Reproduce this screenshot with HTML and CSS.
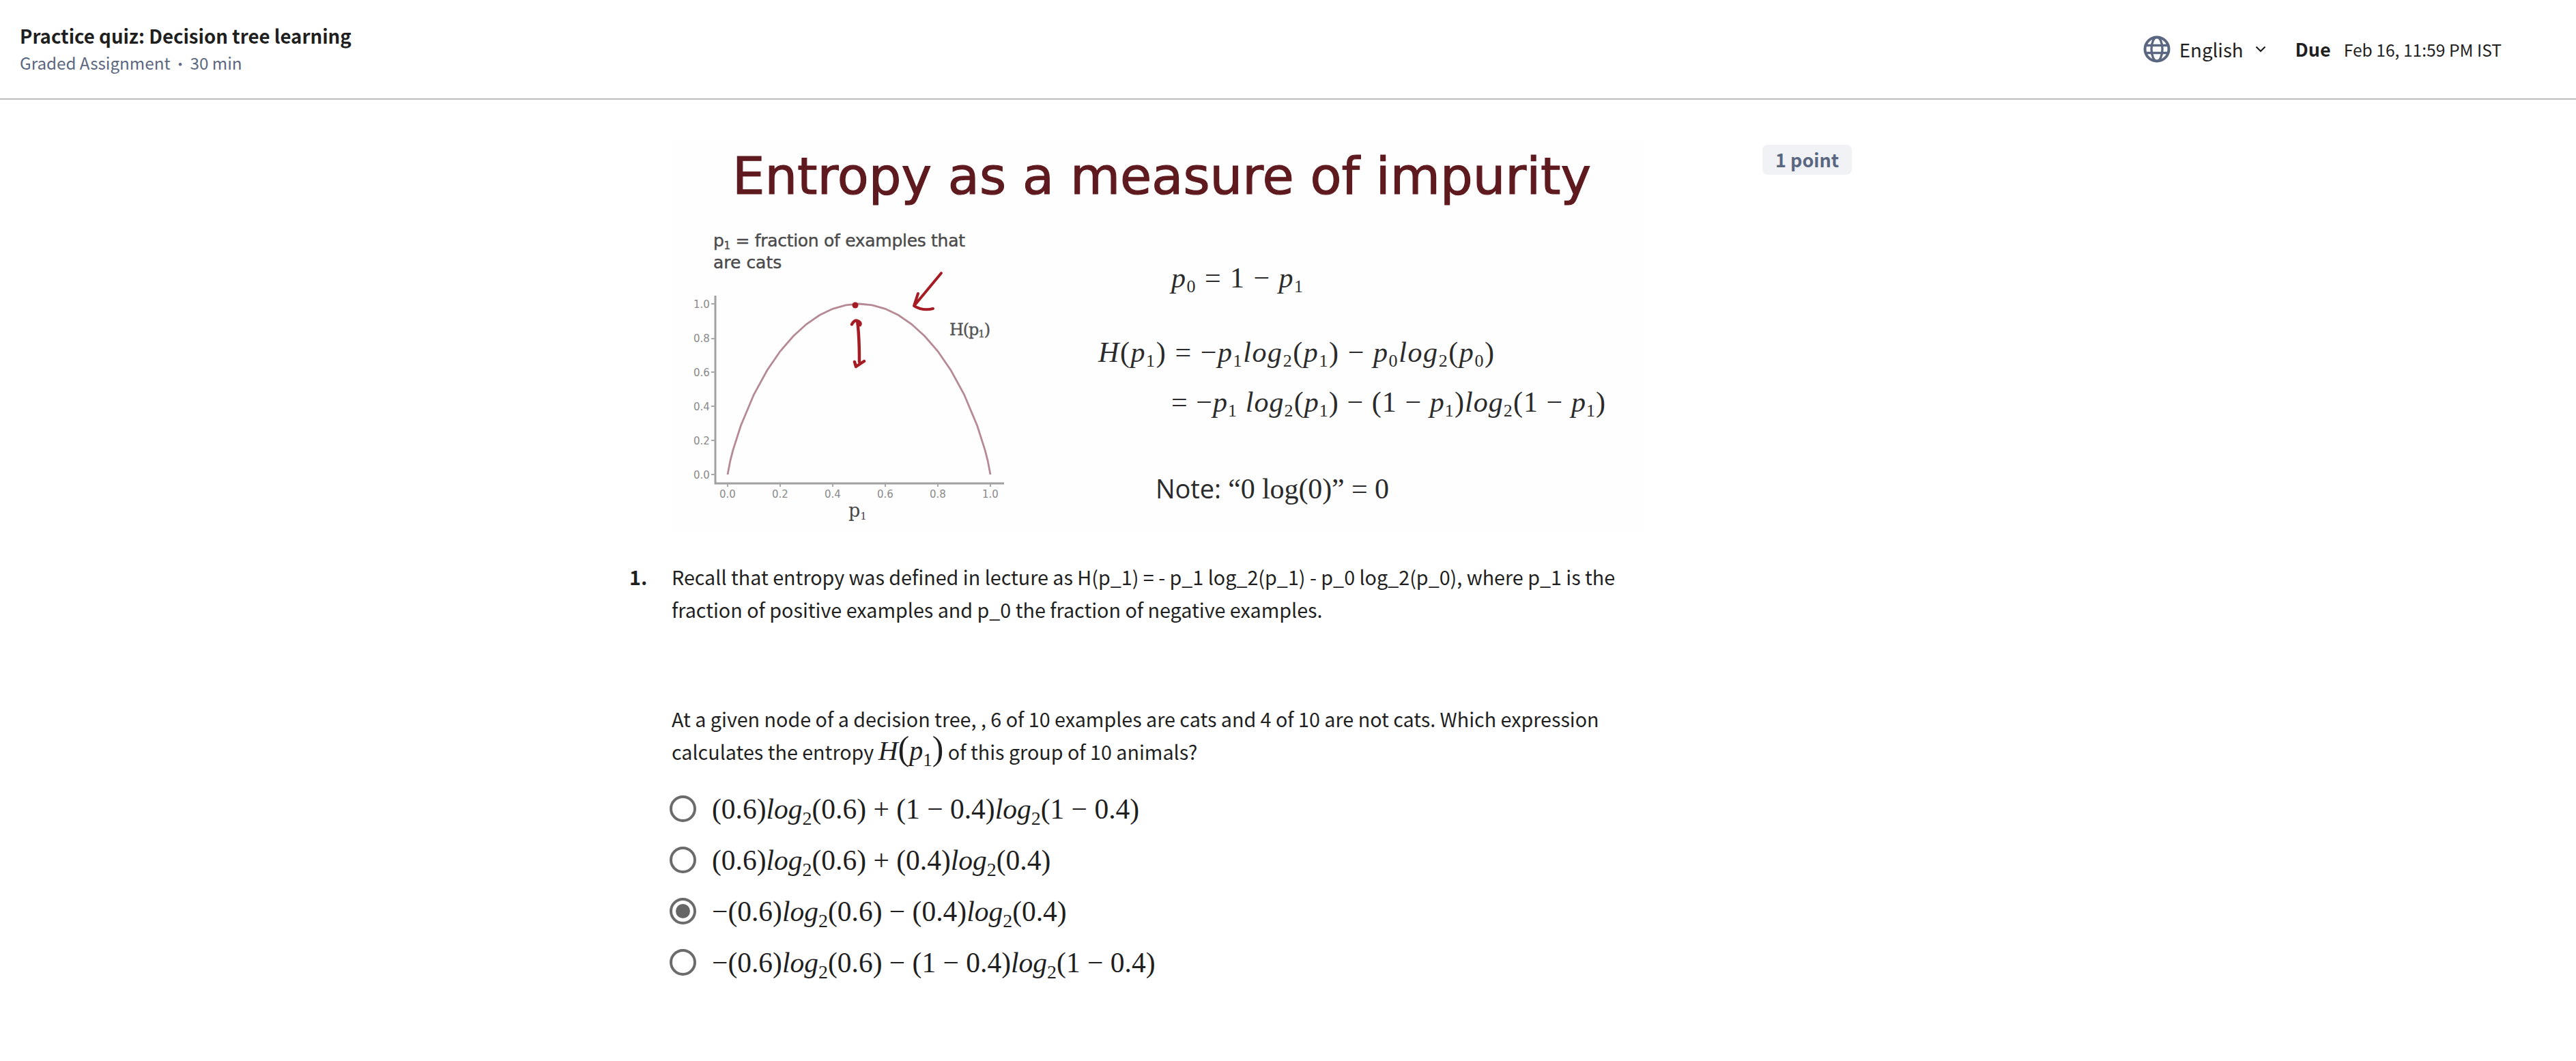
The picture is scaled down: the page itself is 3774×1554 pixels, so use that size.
FILE: index.html
```html
<!DOCTYPE html>
<html lang="en">
<head>
<meta charset="utf-8">
<title>Practice quiz: Decision tree learning</title>
<link rel="stylesheet" href="styles.css">
</head>
<body>
<header class="topbar">
  <div class="heading">
    <h1 class="heading-title">Practice quiz: Decision tree learning</h1>
    <p class="heading-sub">Graded Assignment<span class="dot">•</span>30 min</p>
  </div>
  <div class="meta">
    <div class="lang">
      <svg class="globe" viewBox="0 0 40 40" aria-hidden="true">
        <circle cx="20" cy="20" r="17.5" fill="none" stroke="#5b6780" stroke-width="4"/>
        <ellipse cx="20" cy="20" rx="8" ry="17.5" fill="none" stroke="#5b6780" stroke-width="3.4"/>
        <path d="M3 14.5H37M3 25.5H37" fill="none" stroke="#5b6780" stroke-width="3.4"/>
      </svg>
      <span class="lang-name">English</span>
      <svg class="chevron" viewBox="0 0 16 10" aria-hidden="true"><path d="M1.5 1.5 8 8l6.500-6.500" fill="none" stroke="#1f1f1f" stroke-width="2.2"/></svg>
    </div>
    <div class="due"><strong class="due-label">Due</strong><span class="due-date">Feb 16, 11:59 PM IST</span></div>
  </div>
</header>
<main class="page">
  <div class="quiz">
    <svg class="slide" viewBox="980 200 1440 590" role="img" aria-label="Entropy as a measure of impurity">
      <rect x="984" y="205" width="1426" height="575" fill="#fefefe"/>
      <text class="s-title" x="1073" y="284" textLength="1258" lengthAdjust="spacingAndGlyphs">Entropy as a measure of impurity</text>
      <text class="s-note" x="1045" y="361" textLength="369">p<tspan class="s-sub" dy="4">1</tspan><tspan dy="-4"> = fraction of examples that</tspan></text>
      <text class="s-note" x="1045" y="393">are cats</text>

      <path d="M1048 433V708H1471" fill="none" stroke="#a0a0a0" stroke-width="3"/>
      <path d="M1042 445h6M1042 496h6M1042 545h6M1042 595h6M1042 645h6M1042 695h6M1066 708v5M1143 708v5M1220 708v5M1297 708v5M1374 708v5M1451 708v5" stroke="#a8a8a8" stroke-width="2"/>
      <g class="s-tick">
        <text x="1028" y="451" text-anchor="middle">1.0</text>
        <text x="1028" y="501" text-anchor="middle">0.8</text>
        <text x="1028" y="551" text-anchor="middle">0.6</text>
        <text x="1028" y="601" text-anchor="middle">0.4</text>
        <text x="1028" y="651" text-anchor="middle">0.2</text>
        <text x="1028" y="701" text-anchor="middle">0.0</text>
        <text x="1066" y="729" text-anchor="middle">0.0</text>
        <text x="1143" y="729" text-anchor="middle">0.2</text>
        <text x="1220" y="729" text-anchor="middle">0.4</text>
        <text x="1297" y="729" text-anchor="middle">0.6</text>
        <text x="1374" y="729" text-anchor="middle">0.8</text>
        <text x="1451" y="729" text-anchor="middle">1.0</text>
      </g>
      <polyline fill="none" stroke="#b58a94" stroke-width="2.800" points="1066,695 1069.900,674.800 1073.700,659.800 1085.300,623.500 1104.500,577.800 1123.800,542.500 1143,514.500 1162.300,492.300 1181.500,474.800 1200.800,461.500 1220,452.300 1239.300,446.800 1258.500,445 1277.700,446.800 1297,452.300 1316.200,461.500 1335.500,474.800 1354.700,492.300 1374,514.500 1393.200,542.500 1412.500,577.800 1431.700,623.500 1443.300,659.800 1447.100,674.800 1451,695"/>
      <circle cx="1253" cy="447" r="4.500" fill="#a51c24"/>
      <path d="M1379 400 1340 447M1345 430 1339 448Q1352 456 1367 452" fill="none" stroke="#a51c24" stroke-width="4" stroke-linecap="round" stroke-linejoin="round"/>
      <path d="M1248 475Q1252 468 1256 470M1256 470Q1262 472 1260 476M1256 470Q1259 490 1259 530M1252 530 1254 537 1266 529" fill="none" stroke="#a51c24" stroke-width="4.500" stroke-linecap="round" stroke-linejoin="round"/>
      <text class="s-h" x="1391" y="491" textLength="60">H(p<tspan class="s-sub" dy="3">1</tspan><tspan dy="-3">)</tspan></text>
      <text class="s-p" x="1243" y="757">p<tspan class="s-sub" dy="4">1</tspan></text>

      <text class="s-eq" x="1716" y="421" textLength="193"><tspan class="s-i">p</tspan><tspan class="s-sb" dy="7">0</tspan><tspan dy="-7"> = 1 − </tspan><tspan class="s-i">p</tspan><tspan class="s-sb" dy="7">1</tspan></text>
      <text class="s-eq" x="1609" y="530" textLength="580"><tspan class="s-i">H</tspan>(<tspan class="s-i">p</tspan><tspan class="s-sb" dy="7">1</tspan><tspan dy="-7">) = −</tspan><tspan class="s-i">p</tspan><tspan class="s-sb" dy="7">1</tspan><tspan class="s-i" dy="-7">log</tspan><tspan class="s-sb" dy="7">2</tspan><tspan dy="-7">(</tspan><tspan class="s-i">p</tspan><tspan class="s-sb" dy="7">1</tspan><tspan dy="-7">) − </tspan><tspan class="s-i">p</tspan><tspan class="s-sb" dy="7">0</tspan><tspan class="s-i" dy="-7">log</tspan><tspan class="s-sb" dy="7">2</tspan><tspan dy="-7">(</tspan><tspan class="s-i">p</tspan><tspan class="s-sb" dy="7">0</tspan><tspan dy="-7">)</tspan></text>
      <text class="s-eq" x="1716" y="603" textLength="636">= −<tspan class="s-i">p</tspan><tspan class="s-sb" dy="7">1</tspan><tspan class="s-i" dy="-7"> log</tspan><tspan class="s-sb" dy="7">2</tspan><tspan dy="-7">(</tspan><tspan class="s-i">p</tspan><tspan class="s-sb" dy="7">1</tspan><tspan dy="-7">) − (1 − </tspan><tspan class="s-i">p</tspan><tspan class="s-sb" dy="7">1</tspan><tspan dy="-7">)</tspan><tspan class="s-i">log</tspan><tspan class="s-sb" dy="7">2</tspan><tspan dy="-7">(1 − </tspan><tspan class="s-i">p</tspan><tspan class="s-sb" dy="7">1</tspan><tspan dy="-7">)</tspan></text>
      <text class="s-eq s-eq-note" x="1693" y="730" textLength="342"><tspan class="s-sans">Note:</tspan> “0 log(0)” = 0</text>
    </svg>

    <div class="question">
      <div class="q-num">1.</div>
      <div class="q-body">
        <p class="q-para">Recall that entropy was defined in lecture as H(p_1) = - p_1 log_2(p_1) - p_0 log_2(p_0), where p_1 is the fraction of positive examples and p_0 the fraction of negative examples.</p>
        <p class="q-para q-para-gap">At a given node of a decision tree, , 6 of 10 examples are cats and 4 of 10 are not cats. Which expression calculates the entropy <span class="math-inline"><i>H</i><span class="big">(</span><i>p</i><sub>1</sub><span class="big">)</span></span> of this group of 10 animals?</p>
      </div>
    </div>

    <ul class="options">
      <li class="option"><span class="radio"></span><span class="math">(0.6)<i>log</i><sub>2</sub>(0.6) + (1 − 0.4)<i>log</i><sub>2</sub>(1 − 0.4)</span></li>
      <li class="option"><span class="radio"></span><span class="math">(0.6)<i>log</i><sub>2</sub>(0.6) + (0.4)<i>log</i><sub>2</sub>(0.4)</span></li>
      <li class="option"><span class="radio radio-on"></span><span class="math">−(0.6)<i>log</i><sub>2</sub>(0.6) − (0.4)<i>log</i><sub>2</sub>(0.4)</span></li>
      <li class="option"><span class="radio"></span><span class="math">−(0.6)<i>log</i><sub>2</sub>(0.6) − (1 − 0.4)<i>log</i><sub>2</sub>(1 − 0.4)</span></li>
    </ul>
  </div>
  <div class="points">1 point</div>
</main>
</body>
</html>
```
FILE: styles.css
```css
* { box-sizing: border-box; }
html, body { margin: 0; padding: 0; background: #fff; }
body {
  font-family: "Noto Sans CJK SC", "Liberation Sans", sans-serif;
  color: #1f1f1f;
  font-size: 28.7px;
  line-height: 48px;
}

/* Top bar */
.topbar {
  display: flex;
  justify-content: space-between;
  align-items: center;
  height: 146px;
  padding: 0 109px 0 29px;
  border-bottom: 2px solid #bdbdbd;
}
.heading-title {
  margin: 0;
  font-size: 27.6px;
  line-height: 40px;
  font-weight: 600;
}
.heading-sub {
  margin: 0;
  font-size: 24.2px;
  line-height: 40px;
  color: #5b6780;
}
.dot { margin: 0 4px; font-size: 21px; }
.meta { display: flex; align-items: center; gap: 43px; }
.lang { display: flex; align-items: center; }
.globe { width: 40px; height: 40px; margin-right: 13px; }
.lang-name { font-size: 27.6px; line-height: 48px; }
.chevron { width: 16px; height: 10px; margin-left: 17px; }
.due { display: flex; align-items: center; gap: 19px; font-size: 24.6px; line-height: 40px; }
.due-label { font-size: 27px; font-weight: 600; }

/* Page */
.page { display: flex; align-items: flex-start; padding: 54px 0 0 922px; }
.quiz { width: 1660px; }
.slide { display: block; width: 1440px; height: 590px; margin-left: 58px; }
.points {
  margin-top: 12px;
  padding: 0 19px;
  height: 44px;
  line-height: 44px;
  font-size: 27px;
  font-weight: 600;
  color: #5b6780;
  background: #f0f2f6;
  border-radius: 8px;
}

/* Slide text */
.s-title { font-family: "DejaVu Sans", sans-serif; font-size: 74px; fill: #5e1a1e; stroke: #5e1a1e; stroke-width: 1.2px; }
.s-note { font-family: "DejaVu Sans", sans-serif; font-size: 25px; fill: #4a4a4a; stroke: #4a4a4a; stroke-width: 0.4px; }
.s-sub { font-size: 15px; }
.s-tick { font-family: "DejaVu Sans", sans-serif; font-size: 15px; fill: #8a8a8a; }
.s-h { font-family: "DejaVu Serif", serif; font-size: 24px; fill: #555; stroke: #555; stroke-width: 0.4px; }
.s-p { font-family: "DejaVu Serif", serif; font-size: 27px; fill: #444; }
.s-eq { font-family: "Liberation Serif", serif; font-size: 42px; fill: #2b2b2b; }
.s-eq-note { font-size: 42px; }
.s-sans { font-family: "Open Sans", sans-serif; font-size: 38px; }
.s-i { font-style: italic; }
.s-sb { font-size: 26px; }

/* Question */
.question { display: grid; grid-template-columns: 62px 1fr; margin-top: 31px; }
.q-num { font-weight: 600; }
.q-body { width: 1420px; }
.q-para { margin: 0; }
.q-para-gap { margin-top: 112px; }
.math-inline { font-family: "Liberation Serif", serif; font-size: 40px; line-height: 0; }
.math-inline .big { font-size: 50px; line-height: 0; font-weight: 300; }
.math-inline sub { font-size: 27px; line-height: 0; }

/* Options */
.options { list-style: none; margin: 22px 0 0 59px; padding: 0; }
.option { display: flex; align-items: center; height: 75px; }
.radio {
  flex: none;
  width: 39px;
  height: 39px;
  margin-right: 23px;
  border: 4px solid #6b6b6b;
  border-radius: 50%;
  display: flex;
  align-items: center;
  justify-content: center;
}
.radio-on::after {
  content: "";
  width: 21px;
  height: 21px;
  border-radius: 50%;
  background: #666;
}
.math { font-family: "Liberation Serif", serif; font-size: 41.5px; line-height: 48px; }
.math sub { font-size: 28px; line-height: 0; }
```
